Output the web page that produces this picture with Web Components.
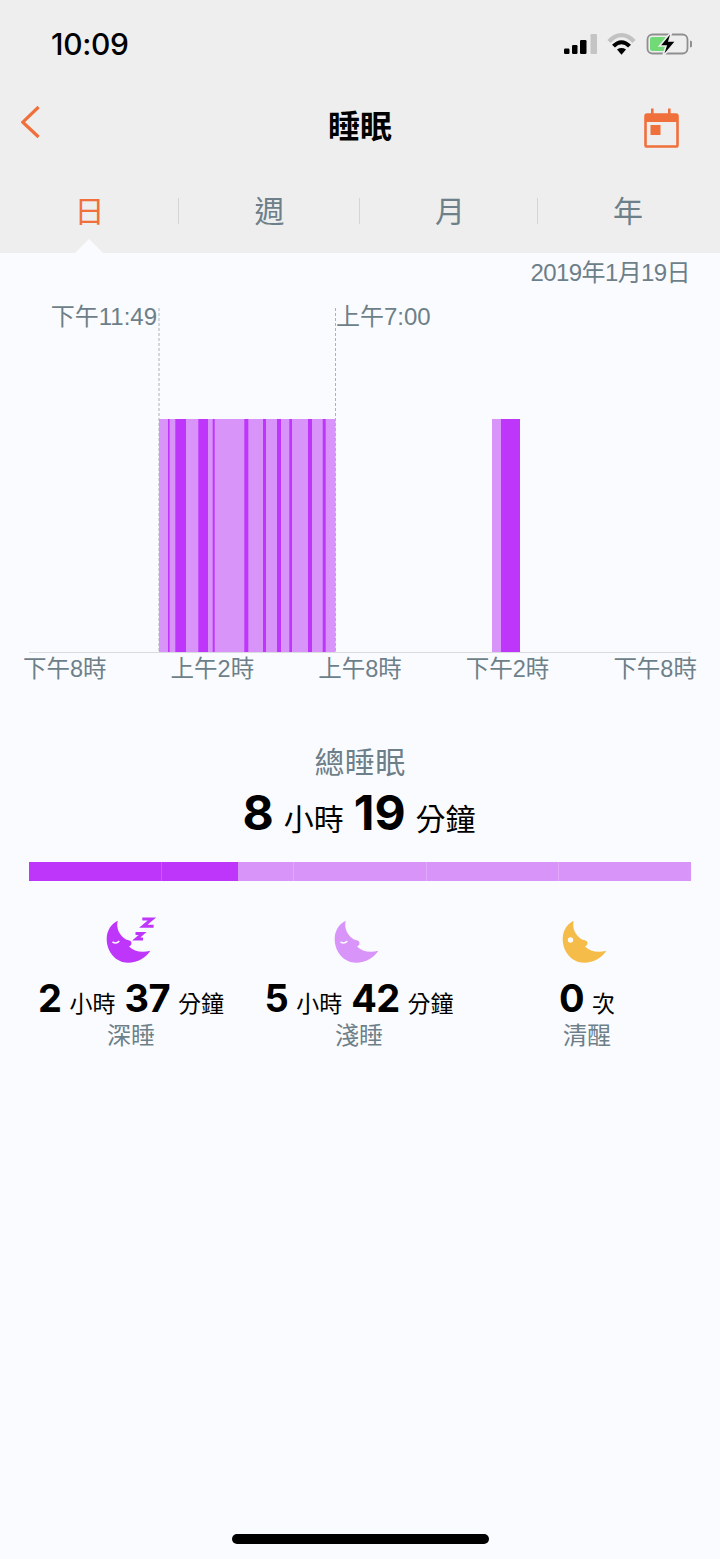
<!DOCTYPE html>
<html lang="zh-Hant"><head><meta charset="utf-8"><title>睡眠</title>
<style>
html,body{margin:0;padding:0;background:#fafbfe}
body{width:720px;height:1559px;overflow:hidden;display:flex;flex-direction:column;font-family:"Liberation Sans","Noto Sans CJK TC",sans-serif}
</style></head><body>
<sleep-top>
  <status-bar></status-bar>
  <nav-bar title-text="睡眠"></nav-bar>
  <tab-bar></tab-bar>
</sleep-top>
<sleep-chart></sleep-chart>
<sleep-total></sleep-total>
<sleep-stages></sleep-stages>
<home-bar></home-bar>
<script>
const FONT='"Liberation Sans","Noto Sans CJK TC",sans-serif';
const NUM='Inter,"Liberation Sans",sans-serif';
function def(name,html){
  customElements.define(name,class extends HTMLElement{
    constructor(){super();const r=this.attachShadow({mode:'open'});r.innerHTML=typeof html==='function'?html(this):html;}
  });
}
def('sleep-top',`<style>:host{display:flex;flex-direction:column;height:253px;background:#eeeeee;flex:none}</style><slot></slot>`);
def('status-bar',`<style>
:host{display:flex;height:88px;box-sizing:border-box;padding:0 28px 0 51px;justify-content:space-between;align-items:flex-start;flex:none}
.t{font:500 30px/1 ${NUM};color:#000;margin-top:29px;letter-spacing:-.3px}
svg{display:block;margin-top:32px}
</style><span class="t">10:09</span>
<svg width="130" height="24" viewBox="562 32 130 24">
<g fill="#000"><rect x="564" y="48.5" width="5.5" height="5.5" rx="1.2"/><rect x="572" y="45" width="5.5" height="9" rx="1.2"/><rect x="580" y="40" width="6.5" height="14" rx="1.2"/></g>
<rect x="590.5" y="34" width="6.5" height="20" rx="1.2" fill="#c4c4c4"/>
<g fill="none"><path d="M609 41.5C616.5 33 626.5 33 634 41.5" stroke="#c2c2c2" stroke-width="4.4"/><path d="M613.5 46.2C618.5 40.8 624.5 40.8 629.5 46.2" stroke="#000" stroke-width="4"/></g>
<path d="M617 49.5C620 47.6 623 47.6 626 49.5L621.5 54.8Z" fill="#000"/>
<rect x="647.5" y="34.5" width="40" height="19" rx="5" fill="none" stroke="#8f8f8f" stroke-width="1.8"/>
<path d="M690 40.5C692 41 693 42.5 693 44S692 47 690 47.5Z" fill="#8f8f8f"/>
<rect x="650" y="37" width="17" height="14" rx="2" fill="#72d977"/>
<path d="M672 31L659.5 46H666L662.5 57L676 41H669Z" fill="#000" stroke="#eeeeee" stroke-width="1.6"/>
</svg>`);
def('nav-bar',(h)=>`<style>
:host{display:grid;grid-template-columns:1fr auto 1fr;height:78px;align-items:center;padding:0 41px;flex:none}
h1{margin:0;font:700 32px/1 ${FONT};color:#000}
svg{display:block}
.l{margin:-10px 0 0 -20px}
.r{justify-self:end;margin-top:2px}
</style>
<svg class="l" width="20" height="34" viewBox="21 105 20 34"><path d="M38.6 107L22.8 122.2L38.6 137" fill="none" stroke="#f0703c" stroke-width="3.2"/></svg>
<h1>${h.getAttribute('title-text')}</h1>
<svg class="r" width="35" height="40" viewBox="644 108 35 40">
<path d="M652.3 108.5V115M669.3 108.5V115" stroke="#f0703c" stroke-width="2.6"/>
<rect x="645.5" y="114.5" width="32" height="32" rx="1.6" fill="none" stroke="#f0703c" stroke-width="2.6"/>
<rect x="645" y="114" width="33" height="8" fill="#f0703c"/>
<rect x="650.5" y="125" width="10" height="10" fill="#f0703c"/>
</svg>`);
def('tab-bar',`<style>
:host{display:grid;grid-template-columns:179px 181px 178px 182px;height:87px;flex:none;position:relative;box-sizing:border-box;padding-top:28px}
.tri{position:absolute;left:75px;bottom:0;width:0;height:0;border:14px solid transparent;border-top:0;border-bottom:14px solid #fafbfe}
</style>
<tab-item active>日</tab-item><tab-item style="--pl:0">週</tab-item><tab-item style="--pl:2px">月</tab-item><tab-item last style="--pr:2px">年</tab-item>
<div class="tri"></div>`);
def('tab-item',(h)=>`<style>
:host{display:block;height:36px;position:relative}
div{display:flex;align-items:center;justify-content:center;height:36px;box-sizing:border-box;padding:0 var(--pr,0) 0 var(--pl,0);font:400 30px/36px ${FONT};color:${h.hasAttribute('active')?'#f0703c':'#6d7f89'}}
i{position:absolute;right:0;top:4px;height:26px;width:1px;background:#d3d4d5;display:${h.hasAttribute('last')?'none':'block'}}
</style><div><slot></slot></div><i></i>`);
(function(){
const stripes=[[168,1.6],[175.3,10.7],[198.3,9.7],[212.7,2],[244.3,4],[263,3],[277,4],[289.3,2.7],[308,4],[322.7,3]];
const rects=stripes.map(s=>`<rect x="${s[0]}" y="419" width="${s[1]}" height="233" fill="#bf36fb"/>`).join('');
def('sleep-chart',`<style>
:host{display:block;flex:none;height:436px;position:relative;color:#6d7f89;font:400 23.5px/28px ${FONT}}
.date{display:flex;justify-content:flex-end;padding:6px 30px 0 0;font-size:24px;line-height:28px;letter-spacing:-.6px}
svg{position:absolute;left:0;top:0}
.mark{position:absolute;top:50px;font-size:24px}
.axis{position:absolute;left:23px;right:23px;top:402px;display:flex;justify-content:space-between}
</style>
<div class="date">2019年1月19日</div>
<svg width="720" height="436" viewBox="0 253 720 436">
<rect x="159" y="419" width="176.5" height="233" fill="#d994f9"/>${rects}
<rect x="492" y="419" width="28" height="233" fill="#d994f9"/><rect x="501" y="419" width="19" height="233" fill="#bf36fb"/>
<path d="M159 308V652M335.5 308V652" stroke="#aeb2b6" stroke-width="1" stroke-dasharray="3 2" fill="none"/>
<path d="M29 652.5H691" stroke="#d9dadd" stroke-width="1"/>
</svg>
<span class="mark" style="right:563px">下午11:49</span>
<span class="mark" style="left:336px">上午7:00</span>
<div class="axis"><span>下午8時</span><span>上午2時</span><span>上午8時</span><span>下午2時</span><span>下午8時</span></div>`);
})();
def('num-unit',(h)=>`<style>
:host{display:inline-flex;align-items:baseline;color:#000;white-space:nowrap;font:400 var(--u,23px)/1 ${FONT}}
b{font:700 var(--n,38px)/1 ${NUM};margin:0 var(--g,8px) 0 0;letter-spacing:var(--ls,-.6px)}
</style><b>${h.getAttribute('n')}</b><span>${h.getAttribute('u')}</span>`);
def('sleep-total',`<style>
:host{display:flex;flex-direction:column;align-items:center;flex:none;padding-top:56px}
.l{font:400 30px/36px ${FONT};color:#6d7f89;letter-spacing:.4px}
.v{display:flex;gap:10px;margin:8px 2px 0 0;height:49px;align-items:baseline;--n:48px;--u:30px;--g:10px;--ls:0}
.bar{align-self:stretch;margin:24px 29px 0;height:19px;display:flex;background:linear-gradient(90deg,#bf36fb 0 209.5px,#d994f9 209.5px)}
.bar i{flex:1;border-left:1px solid rgba(255,255,255,.18)}
.bar i:first-child{border:0}
</style>
<div class="l">總睡眠</div>
<div class="v"><num-unit n="8" u="小時"></num-unit><num-unit n="19" u="分鐘"></num-unit></div>
<div class="bar"><i></i><i></i><i></i><i></i><i></i></div>`);
const moon=`M11.7 .7C4.5 4.5 .7 11 .7 19C.7 32 10 42.7 22 42.7C32 42.7 40 37.5 44.3 30.7C36 33 28 31.5 23 26.5C26 25.5 26.5 21.5 23.5 20.5L20 19.5C13 15 10 8 11.7 .7Z`;
def('moon-icon',(h)=>{const c=h.getAttribute('color'),k=h.getAttribute('kind');return `<style>:host{display:block;height:46px;flex:none}svg{display:block;overflow:visible}</style>
<svg width="46" height="44" viewBox="0 0 46 44"><path d="${moon}" fill="${c}"/>
${k==='awake'?'<circle cx="8.5" cy="20" r="2.7" fill="#fafbfe"/>':'<path d="M6.5 21.8C8.5 23.4 11 23.4 13.3 21.2" fill="none" stroke="#fafbfe" stroke-width="1.6"/>'}
${k==='deep'?'<path d="M36.3 -1H46L37.2 6.3H47.6M29.5 13.6H36.5L30.2 19H37" fill="none" stroke="'+c+'" stroke-width="3"/>':''}
</svg>`});
def('sleep-stage',(h)=>`<style>
:host{display:flex;flex-direction:column;align-items:center}
moon-icon{margin-right:5px}
.v{display:flex;gap:9px;align-items:baseline;height:38px;margin-top:13px}
.l{font:400 24px/28px ${FONT};color:#6d7f89;margin-top:5px}
</style><moon-icon color="${h.getAttribute('color')}" kind="${h.getAttribute('kind')}"></moon-icon><div class="v"><slot></slot></div><div class="l">${h.getAttribute('label')}</div>`);
def('sleep-stages',`<style>
:host{display:grid;grid-template-columns:repeat(3,228px);padding:39px 0 0 17px;flex:none}
</style>
<sleep-stage color="#bf36fb" kind="deep" label="深睡"><num-unit n="2" u="小時"></num-unit><num-unit n="37" u="分鐘"></num-unit></sleep-stage>
<sleep-stage color="#d994f9" kind="light" label="淺睡"><num-unit n="5" u="小時"></num-unit><num-unit n="42" u="分鐘"></num-unit></sleep-stage>
<sleep-stage color="#f5bc49" kind="awake" label="清醒"><num-unit n="0" u="次"></num-unit></sleep-stage>`);
def('home-bar',`<style>:host{display:flex;justify-content:center;margin-top:auto;padding-bottom:15px;flex:none}i{display:block;width:257px;height:10px;border-radius:5px;background:#000}</style><i></i>`);
</script>
</body></html>
